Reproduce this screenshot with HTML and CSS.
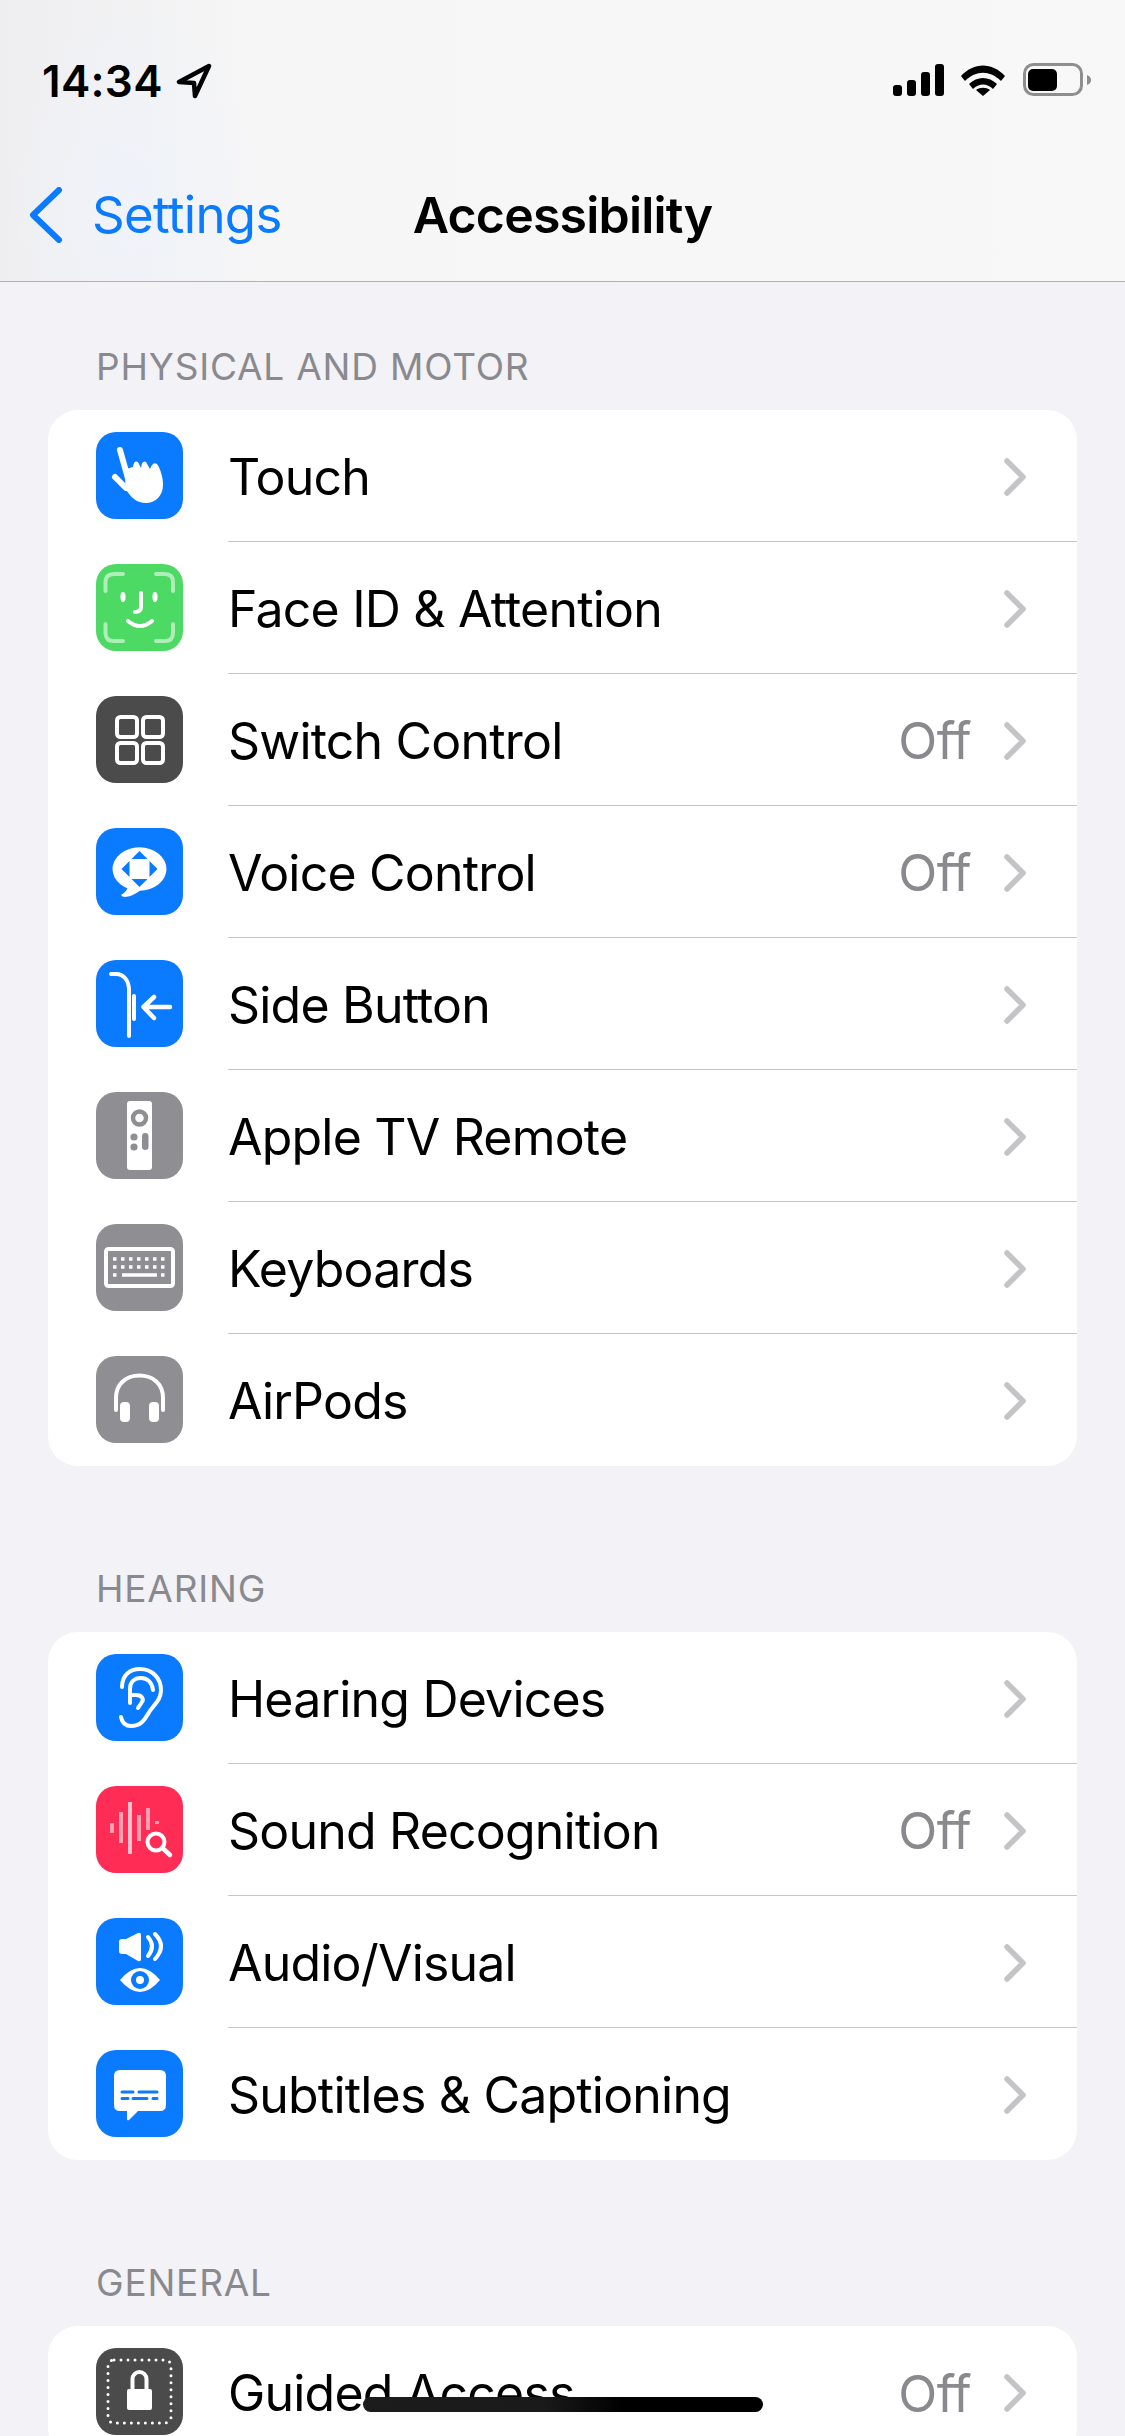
FILE: index.html
```html
<!DOCTYPE html>
<html>

<head>
    <title>Accessibility</title>

    <link rel="stylesheet" href="styles.css">
</head>

<body>
    <header class="top">
        <div class="status">
            <div class="status-left">
                <span class="time">14:34</span>
                <svg class="loc" width="36" height="36" viewBox="0 0 36 36">
                    <path d="M33 3 L3 19 L18 20 L19 33 Z" />
                </svg>
            </div>
            <svg class="status-right" width="200" height="36" viewBox="0 0 200 36">
                <rect x="2" y="22" width="9" height="11" rx="3" />
                <rect x="16" y="17" width="9" height="16" rx="3" />
                <rect x="30" y="9" width="9" height="24" rx="3" />
                <rect x="44" y="1" width="9" height="32" rx="3" />
                <path d="M70 13 C83 -1 101 -1 114 13 L110 18 C99 7 85 7 74 18 Z" />
                <path d="M78 21 C86 13 98 13 106 21 L102 26 C96 20 88 20 82 26 Z" />
                <path d="M92 33 L85 27 C89 24 95 24 99 27 Z" />
                <rect class="batt-frame" x="133.5" y="1.5" width="57" height="30" rx="9" />
                <rect x="137" y="6" width="29" height="22" rx="5" />
                <path class="batt-nub" d="M196 12 C199 13 200 15 200 17 C200 19 199 21 196 22 Z" />
            </svg>
        </div>
        <nav class="nav">
            <a class="back">
                <svg width="34" height="56" viewBox="0 0 34 56">
                    <path d="M30 3 L4 28 L30 53" />
                </svg>
                <span>Settings</span>
            </a>
            <h1 class="title">Accessibility</h1>
        </nav>
    </header>

    <main class="content">
        <h2 class="section-label">PHYSICAL AND MOTOR</h2>
        <section class="card">
            <div class="row">
                <svg class="icon blue" viewBox="0 0 87 87">
                    <path class="fill" d="M30 37 L37 35 Q38 28 42 30 L45 36 Q46 28 50 30 L54 37 Q57 29 61 32 C65 38 67 46 67 53 C67 64 59 71 50 71 C41 71 35 66 29 56 Z" />
                    <path class="line finger" d="M24 18 L33 50 M19 45 L30 56" />
                </svg>
                <div class="row-body"><span class="label">Touch</span><svg class="chev" viewBox="0 0 22 38"><path d="M3 3 L19 19 L3 35" /></svg></div>
            </div>
            <div class="row">
                <svg class="icon green" viewBox="0 0 87 87">
                    <path class="line soft" d="M9.5 27 V18 Q9.5 10 18 10 H27 M60 10 H69 Q77 10 77 18 V27 M77 60 V69 Q77 77 69 77 H60 M27 77 H18 Q9.5 77 9.5 69 V60" />
                    <ellipse class="fill" cx="27" cy="33" rx="2.6" ry="5" />
                    <ellipse class="fill" cx="59" cy="33" rx="2.6" ry="5" />
                    <path class="line" d="M45 29 V43 Q45 48 39 48 M32 57 Q44 67 56 57" />
                </svg>
                <div class="row-body"><span class="label">Face ID &amp; Attention</span><svg class="chev" viewBox="0 0 22 38"><path d="M3 3 L19 19 L3 35" /></svg></div>
            </div>
            <div class="row">
                <svg class="icon dark" viewBox="0 0 87 87">
                    <rect class="line" x="21" y="21" width="20" height="20" rx="3.5" />
                    <rect class="line" x="47" y="21" width="20" height="20" rx="3.5" />
                    <rect class="line" x="21" y="47" width="20" height="20" rx="3.5" />
                    <rect class="line" x="47" y="47" width="20" height="20" rx="3.5" />
                </svg>
                <div class="row-body"><span class="label">Switch Control</span><span class="value">Off</span><svg class="chev" viewBox="0 0 22 38"><path d="M3 3 L19 19 L3 35" /></svg></div>
            </div>
            <div class="row">
                <svg class="icon blue" viewBox="0 0 87 87">
                    <ellipse class="fill" cx="43.5" cy="41" rx="27" ry="21.7" />
                    <path class="fill" d="M32 58 Q31 64 25 67 Q26 69 29 69 Q38 68 46 61 Z" />
                    <path class="cut" d="M43.5 23 L51.5 31 H35.5 Z M43.5 59 L51.5 51 H35.5 Z M25.5 41 L33.5 33 V49 Z M61.5 41 L53.5 33 V49 Z" />
                </svg>
                <div class="row-body"><span class="label">Voice Control</span><span class="value">Off</span><svg class="chev" viewBox="0 0 22 38"><path d="M3 3 L19 19 L3 35" /></svg></div>
            </div>
            <div class="row">
                <svg class="icon blue" viewBox="0 0 87 87">
                    <path class="line" d="M15 14 H20 C28 14 33 21 33 30 V76" />
                    <path class="line" d="M38 36 V59" />
                    <path class="line thick" d="M74 47 H48 M58 37 L47.5 47 L58 58" />
                </svg>
                <div class="row-body"><span class="label">Side Button</span><svg class="chev" viewBox="0 0 22 38"><path d="M3 3 L19 19 L3 35" /></svg></div>
            </div>
            <div class="row">
                <svg class="icon gray" viewBox="0 0 87 87">
                    <rect class="fill" x="31" y="9" width="25" height="69" rx="3" />
                    <circle class="ring" cx="43.5" cy="26" r="6.5" />
                    <circle class="gray-dot" cx="38" cy="45" r="3.6" />
                    <circle class="gray-dot" cx="38" cy="55" r="3.6" />
                    <rect class="gray-dot" x="46" y="41" width="6.5" height="17" rx="3.2" />
                </svg>
                <div class="row-body"><span class="label">Apple TV Remote</span><svg class="chev" viewBox="0 0 22 38"><path d="M3 3 L19 19 L3 35" /></svg></div>
            </div>
            <div class="row">
                <svg class="icon gray" viewBox="0 0 87 87">
                    <rect class="line" x="10" y="25" width="67" height="37" rx="2.5" />
                    <path class="keys" d="M17 35 H20.500 M25 35 H28.500 M33 35 H36.500 M41 35 H44.500 M49 35 H52.500 M57 35 H60.500 M65 35 H68.500 M17 43 H20.500 M25 43 H28.500 M33 43 H36.500 M41 43 H44.500 M49 43 H52.500 M57 43 H60.500 M65 43 H68.500 M17 51 H20.500 M26 51 H61 M65 51 H68.500" />
                </svg>
                <div class="row-body"><span class="label">Keyboards</span><svg class="chev" viewBox="0 0 22 38"><path d="M3 3 L19 19 L3 35" /></svg></div>
            </div>
            <div class="row">
                <svg class="icon gray" viewBox="0 0 87 87">
                    <path class="line" d="M20 54 V42 C20 28 30 19.500 43.500 19.500 C57 19.500 67 28 67 42 V54" />
                    <rect class="fill" x="24" y="46" width="10" height="20" rx="4" />
                    <rect class="fill" x="53" y="46" width="10" height="20" rx="4" />
                </svg>
                <div class="row-body"><span class="label">AirPods</span><svg class="chev" viewBox="0 0 22 38"><path d="M3 3 L19 19 L3 35" /></svg></div>
            </div>
        </section>

        <h2 class="section-label">HEARING</h2>
        <section class="card">
            <div class="row">
                <svg class="icon blue" viewBox="0 0 87 87">
                    <path class="line" d="M26 33 C26 21 34 15 44 15 C56 15 65 24 65 36 C65 47 57 51 52 60 C48 67 44 72 35 72 C29 72 26 68 25 63" />
                    <path class="line" d="M34 49 V35 C34 28 38 24 45 24 C52 24 56 29 57 36 M34 41 H40 C46 41 48 45 46 48 L42 54" />
                </svg>
                <div class="row-body"><span class="label">Hearing Devices</span><svg class="chev" viewBox="0 0 22 38"><path d="M3 3 L19 19 L3 35" /></svg></div>
            </div>
            <div class="row">
                <svg class="icon red" viewBox="0 0 87 87">
                    <path class="bars" d="M16 37 V47 M25 26 V57 M43 29 V55 M52 22 V44 M61 35 V38" />
                    <path class="bars mid" d="M34 16 V68" />
                    <circle class="halo" cx="60" cy="56" r="12" />
                    <circle class="line" cx="60" cy="56" r="8.5" />
                    <path class="line thick" d="M66.500 62 L74 69" />
                </svg>
                <div class="row-body"><span class="label">Sound Recognition</span><span class="value">Off</span><svg class="chev" viewBox="0 0 22 38"><path d="M3 3 L19 19 L3 35" /></svg></div>
            </div>
            <div class="row">
                <svg class="icon blue" viewBox="0 0 87 87">
                    <path class="fill" d="M26 21 H30 L42 15 Q45 14 45 17 V41 Q45 44 42 43 L30 36 H26 Q23 36 23 33 V24 Q23 21 26 21 Z" />
                    <path class="line" d="M52 19 Q60 28 52 38 M59 16 Q71 28 59 41" />
                    <path class="fill" d="M24 62 Q44 38 64 62 Q44 86 24 62 Z" />
                    <circle class="cut" cx="44" cy="62" r="9" />
                    <circle class="fill" cx="44" cy="62" r="4" />
                </svg>
                <div class="row-body"><span class="label">Audio/Visual</span><svg class="chev" viewBox="0 0 22 38"><path d="M3 3 L19 19 L3 35" /></svg></div>
            </div>
            <div class="row">
                <svg class="icon blue" viewBox="0 0 87 87">
                    <path class="fill" d="M24 20 H64 Q70 20 70 26 V55 Q70 61 64 61 H42 L33 70 Q31 71 31 69 V61 H24 Q18 61 18 55 V26 Q18 20 24 20 Z" />
                    <path class="cut-line" d="M26 42 H37 M43 42 H61 M26 48.500 H32 M37 48.500 H51 M57 48.500 H61" />
                </svg>
                <div class="row-body"><span class="label">Subtitles &amp; Captioning</span><svg class="chev" viewBox="0 0 22 38"><path d="M3 3 L19 19 L3 35" /></svg></div>
            </div>
        </section>

        <h2 class="section-label">GENERAL</h2>
        <section class="card">
            <div class="row">
                <svg class="icon dark" viewBox="0 0 87 87">
                    <rect class="dots" x="12" y="12" width="63" height="63" rx="6" />
                    <rect class="fill" x="31" y="41" width="25" height="21" rx="2" />
                    <path class="line" d="M36.500 42 V31 A7 7 0 0 1 50.500 31 V42" />
                </svg>
                <div class="row-body"><span class="label">Guided Access</span><span class="value">Off</span><svg class="chev" viewBox="0 0 22 38"><path d="M3 3 L19 19 L3 35" /></svg></div>
            </div>
        </section>
    </main>

    <div class="home-bar"></div>
</body>

</html>
```

FILE: styles.css
```css
html,
body {
    margin: 0;
    height: 2436px;
    overflow: hidden;
}

body {
    position: relative;
    font-family: Inter, "Liberation Sans", sans-serif;
    color: #000;
    background: #f2f2f7;
}

.top {
    height: 282px;
    box-sizing: border-box;
    border-bottom: 1px solid #b1b1b5;
    background:
        radial-gradient(ellipse 130px 190px at 130px 200px, #eff3fa 0%, rgba(239, 243, 250, 0) 100%),
        linear-gradient(90deg, #eeeef0 0, #f6f6f7 260px, #f8f8f8 100%);
}

/* status bar */
.status {
    display: flex;
    justify-content: space-between;
    align-items: center;
    padding: 63px 34px 0 42px;
}

.status-left {
    display: flex;
    align-items: center;
    gap: 13px;
}

.time {
    font-size: 44px;
    line-height: 36px;
    font-weight: 600;
    letter-spacing: 0.3px;
}

.loc path {
    fill: none;
    stroke: #000;
    stroke-width: 4.5;
    stroke-linejoin: round;
}

.batt-frame {
    fill: none;
    stroke: #8e8e8e;
    stroke-width: 3;
}

.batt-nub {
    fill: #8e8e8e;
}

/* nav */
.nav {
    position: relative;
    display: flex;
    justify-content: center;
    align-items: center;
    height: 100px;
    margin-top: 66px;
}

.back {
    position: absolute;
    left: 29px;
    top: 22px;
    display: flex;
    align-items: center;
    gap: 29px;
    color: #0a7aff;
    font-size: 51px;
    line-height: 56px;
    letter-spacing: -0.7px;
}

.back svg {
    fill: none;
    stroke: #0a7aff;
    stroke-width: 6;
    stroke-linecap: round;
    stroke-linejoin: round;
}

.title {
    margin: 0;
    font-size: 50px;
    font-weight: 600;
    letter-spacing: -0.8px;
}

/* list */
.content {
    padding: 0 48px;
}

.section-label {
    margin: 0;
    padding: 63px 0 0 48px;
    height: 65px;
    font-size: 37px;
    line-height: 44px;
    font-weight: 400;
    color: #8a8a8e;
    letter-spacing: 0.8px;
}

.card {
    background: #fff;
    border-radius: 30px;
    overflow: hidden;
}

.card + .section-label {
    padding-top: 101px;
}

.row {
    display: flex;
    align-items: stretch;
    height: 132px;
    padding-left: 48px;
    gap: 45px;
}

.icon {
    width: 87px;
    height: 87px;
    flex: none;
    align-self: center;
    margin-top: -1px;
    border-radius: 20px;
}

.row-body {
    flex: 1;
    display: flex;
    align-items: center;
    border-bottom: 1.5px solid #c6c6c8;
    box-sizing: border-box;
    padding: 2px 51px 0 0;
}

.row:last-child .row-body {
    border-bottom: none;
}

.label {
    flex: 1;
    font-size: 50px;
    letter-spacing: -0.8px;
    white-space: nowrap;
}

.value {
    font-size: 51px;
    color: #8a8a8e;
    letter-spacing: -0.7px;
    margin-right: 33px;
}

.chev {
    width: 22px;
    height: 38px;
    fill: none;
    stroke: #c4c4c7;
    stroke-width: 5.5;
    stroke-linecap: round;
    stroke-linejoin: round;
}

/* icon colours */
.blue { background: #0a7aff; }
.green { background: #4cd964; }
.dark { background: #4b4b4b; }
.gray { background: #8e8e93; }
.red { background: #ff2d55; }

.fill { fill: #fff; }

.line {
    fill: none;
    stroke: #fff;
    stroke-width: 4;
    stroke-linecap: round;
    stroke-linejoin: round;
}

.line.thick { stroke-width: 4.5; }
.line.finger { stroke-width: 6; }
.line.soft { stroke: rgba(255, 255, 255, 0.55); }

.cut { fill: #0a7aff; }

.cut-line {
    fill: none;
    stroke: #0a7aff;
    stroke-width: 3;
    stroke-linecap: round;
}

.ring {
    fill: none;
    stroke: #8e8e93;
    stroke-width: 4.5;
}

.gray-dot { fill: #8e8e93; }

.keys {
    fill: none;
    stroke: #fff;
    stroke-width: 3.5;
}

.bars {
    fill: none;
    stroke: rgba(255, 255, 255, 0.55);
    stroke-width: 4;
}

.bars.mid { stroke: rgba(255, 255, 255, 0.7); }

.halo { fill: #ff2d55; }

.dots {
    fill: none;
    stroke: #fff;
    stroke-width: 3;
    stroke-linecap: round;
    stroke-dasharray: 0 7;
}

.home-bar {
    position: absolute;
    left: 363px;
    top: 2397px;
    width: 400px;
    height: 15px;
    border-radius: 8px;
    background: linear-gradient(90deg, #1c1c1c 0, #1a1a1a 45%, #000 65%);
}
```
